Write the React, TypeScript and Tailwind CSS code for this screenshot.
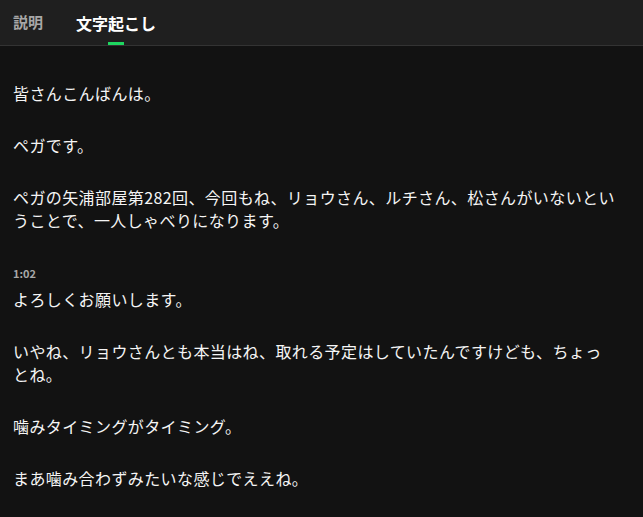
const segments: { time?: string; text: string }[] = [
  { text: '皆さんこんばんは。' },
  { text: 'ペガです。' },
  {
    text: 'ペガの矢浦部屋第282回、今回もね、リョウさん、ルチさん、松さんがいないということで、一人しゃべりになります。',
  },
  { time: '1:02', text: 'よろしくお願いします。' },
  {
    text: 'いやね、リョウさんとも本当はね、取れる予定はしていたんですけども、ちょっとね。',
  },
  { text: '噛みタイミングがタイミング。' },
  { text: 'まあ噛み合わずみたいな感じでええね。' },
];

const font = { fontFamily: '"Noto Sans CJK JP", "Noto Sans", sans-serif' };

export default function App() {
  return (
    <div className="h-[517px] w-[643px] overflow-hidden bg-[#121212]" style={font}>
      {/* Tabs */}
      <div className="flex h-[46px] items-end gap-[33px] border-b border-[#333333] bg-[#1f1f1f] px-[13px]">
        <button className="relative flex h-full items-center text-[15px] font-bold text-[#a7a7a7]">
          説明
        </button>
        <button className="relative flex h-full items-center text-[16px] font-bold text-white">
          文字起こし
          <span className="absolute bottom-0 left-1/2 h-[3px] w-[16px] -translate-x-1/2 bg-[#1ed760]" />
        </button>
      </div>

      {/* Transcript */}
      <div className="w-[615px] pl-[13px] pt-[36px]">
        {segments.map((s, i) => (
          <div key={i} className="mb-[29px]">
            {s.time && (
              <div className="mt-[33px] mb-[7px] text-[11px] leading-[16px] font-bold text-[#a7a7a7]">
                {s.time}
              </div>
            )}
            <p className="text-[16px] leading-[23px] tracking-[0.4px] text-[#f5f5f5]">{s.text}</p>
          </div>
        ))}
      </div>
    </div>
  );
}
